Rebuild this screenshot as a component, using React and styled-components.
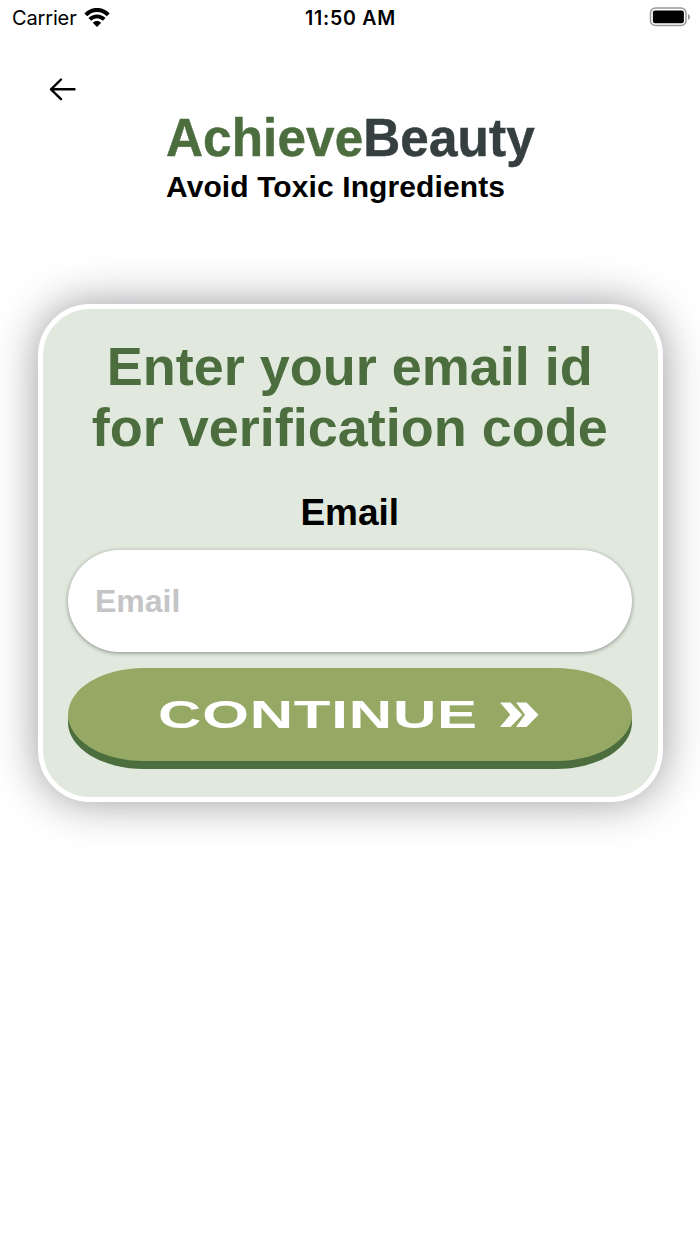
import styled, { createGlobalStyle } from 'styled-components';

const GlobalStyle = createGlobalStyle`
 * {
  box-sizing: border-box;
 }
 body {
  margin: 0;
  background: #fff;
  font-family: 'Liberation Sans', Arial, sans-serif;
 }
`;

const Container = styled.div`
 width: 700px;
 height: 1244px;
 display: flex;
 flex-direction: column;
 background: #fff;
 overflow: hidden;
`;

const StatusBar = styled.header`
 height: 36px;
 padding: 0 9px 0 12px;
 display: grid;
 grid-template-columns: 1fr auto 1fr;
 align-items: center;
 color: #000;
 font-family: Inter, sans-serif;
 font-size: 20px;
 line-height: 36px;
`;

const Network = styled.div`
 display: flex;
 align-items: center;
 gap: 7px;
 letter-spacing: -0.15px;
`;

const Time = styled.span`
 margin-right: 2px;
 font-weight: 600;
 font-size: 19.5px;
 letter-spacing: 0.75px;
`;

const Battery = styled.svg`
 justify-self: end;
 margin-top: -2px;
`;

const Header = styled.div`
 height: 268px;
 padding: 41px 0 0 49px;
 display: flex;
 align-items: flex-start;
`;

const BackButton = styled.button`
 width: 28px;
 height: 24px;
 padding: 0;
 border: none;
 background: none;
 cursor: pointer;
`;

const Brand = styled.div`
 margin: 33px 0 0 89px;
 font-weight: 700;
 white-space: nowrap;
`;

const BrandName = styled.h1`
 margin: 0;
 color: #4c6d3e;
 font-size: 53px;
 line-height: 56px;
 letter-spacing: 0.1px;
 transform: scaleX(0.967);
 transform-origin: left center;
 -webkit-text-stroke: 0.5px;
`;

const BrandAccent = styled.span`
 color: #353f40;
`;

const Tagline = styled.p`
 margin: 0;
 color: #000;
 font-size: 30px;
 line-height: 41px;
 letter-spacing: 0.1px;
`;

const Card = styled.form`
 width: 625px;
 height: 498px;
 margin: 0 auto;
 padding: 27px 25.5px 0 25px;
 display: flex;
 flex-direction: column;
 align-items: stretch;
 background: #e1e9de;
 border: 5px solid #fff;
 border-radius: 52px;
 box-shadow: 0 0 44px rgba(28, 28, 38, 0.45);
`;

const Title = styled.h2`
 margin: 0;
 color: #4c6d3e;
 font-size: 54px;
 line-height: 61px;
 text-align: center;
 white-space: nowrap;
`;

const Label = styled.label`
 margin-top: 31px;
 height: 60.5px;
 color: #000;
 font-size: 37px;
 font-weight: 700;
 line-height: 48px;
 text-align: center;
`;

const Input = styled.input`
 width: 100%;
 height: 102px;
 padding: 2px 27.5px 0;
 border: none;
 border-radius: 51px;
 background: #fff;
 box-shadow: 0 1px 4px rgba(0, 0, 0, 0.4);
 color: #000;
 font-family: inherit;
 font-size: 32px;
 font-weight: 700;
 outline: none;
 &::placeholder {
  color: #c5c5c7;
  opacity: 1;
 }
`;

const Button = styled.button`
 width: 100%;
 height: 93px;
 margin-top: 16.5px;
 padding: 0 93.5px 0 90px;
 display: flex;
 align-items: center;
 justify-content: space-between;
 border: none;
 border-radius: 76px / 46.5px;
 background: #95a965;
 box-shadow: 0 8px 0 #4c6d3e;
 color: #fff;
 font-family: inherit;
 cursor: pointer;
`;

const ButtonText = styled.span`
 font-size: 38.5px;
 font-weight: 700;
 line-height: 40px;
 letter-spacing: 0.5px;
 transform: scaleX(1.56);
 transform-origin: left center;
`;

const App = () => {
 return (
  <Container>
   <GlobalStyle />
   <StatusBar>
    <Network>
     Carrier
     <svg width='26' height='20' viewBox='0 0 26 20'>
      <path d='M1.8 6.8C8 .3 18 .3 24.2 6.8' fill='none' stroke='#000' strokeWidth='4' />
      <path d='M5.8 11.4c4-4.1 10.4-4.1 14.4 0' fill='none' stroke='#000' strokeWidth='3.7' />
      <path d='M8.8 14.7c2.4-2.4 6-2.4 8.4 0l-4.2 4.2z' fill='#000' />
     </svg>
    </Network>
    <Time>11:50 AM</Time>
    <Battery width='42' height='20' viewBox='0 0 42 20'>
     <rect x='1.5' y='1' width='35.5' height='17.5' rx='5' fill='#fff' stroke='#999' strokeWidth='1.5' />
     <rect x='3.9' y='3.4' width='31' height='12.8' rx='2.2' fill='#000' />
     <path d='M39 7v6q2.1-1 2.1-3t-2.1-3z' fill='#999' />
    </Battery>
   </StatusBar>
   <Header>
    <BackButton type='button' aria-label='Back'>
     <svg width='28' height='24' viewBox='0 0 28 24' fill='none' stroke='#000' strokeWidth='2.4' strokeLinecap='round' strokeLinejoin='round'>
      <path d='M25.5 12.3H2M12 2.5 2 12.3l10 9.8' />
     </svg>
    </BackButton>
    <Brand>
     <BrandName>
      Achieve<BrandAccent>Beauty</BrandAccent>
     </BrandName>
     <Tagline>Avoid Toxic Ingredients</Tagline>
    </Brand>
   </Header>
   <Card onSubmit={(e) => e.preventDefault()}>
    <Title>
     Enter your email id
     <br />
     for verification code
    </Title>
    <Label htmlFor='email'>Email</Label>
    <Input id='email' type='email' placeholder='Email' />
    <Button type='submit'>
     <ButtonText>CONTINUE</ButtonText>
     <svg width='39' height='26' viewBox='0 0 39 26' fill='#fff'>
      <path d='M0 .5h10.5l11.8 12.2-11.8 12.2H0l10.3-12.2zM16 .5h10.5l12 12.2-12 12.2H16l9-12.2z' />
     </svg>
    </Button>
   </Card>
  </Container>
 );
};

export default App;
